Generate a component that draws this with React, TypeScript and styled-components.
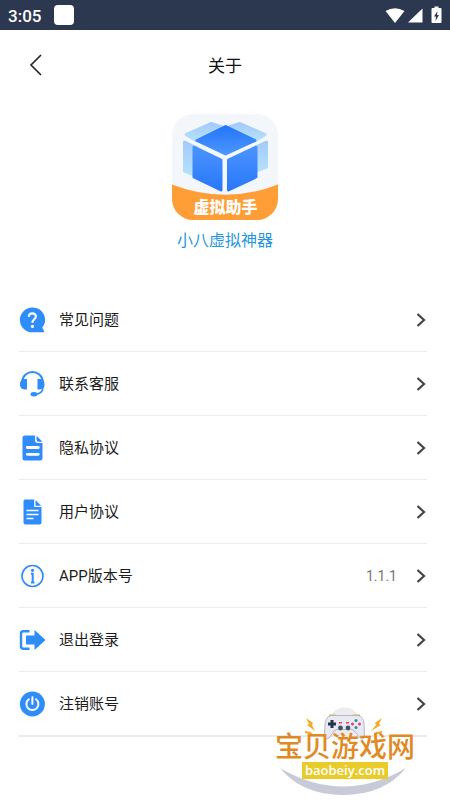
import React from "react";
import styled, { createGlobalStyle } from "styled-components";

const blue = "#2e8cfb";

const GlobalStyle = createGlobalStyle`
  * { box-sizing: border-box; }
  body {
    margin: 0;
    background: #fff;
    color: #1c1c1c;
    font-family: Roboto, "Noto Sans CJK SC", sans-serif;
  }
`;

const Page = styled.div`
  min-height: 100vh;
  overflow: hidden;
`;

const StatusBar = styled.div`
  display: flex;
  align-items: center;
  height: 30px;
  padding: 0 8px;
  background: #2b384f;
  color: #fff;
`;

const Clock = styled.time`
  font-size: 17px;
  font-weight: 500;
  line-height: 24px;
  padding-top: 1px;
`;

const AppBadge = styled.span`
  width: 20px;
  height: 20px;
  margin-left: 13px;
  border-radius: 4px;
  background: #fff;
`;

const StatusIcons = styled.svg`
  width: 60px;
  height: 20px;
  margin-left: auto;
`;

const Header = styled.header`
  display: grid;
  grid-template-columns: 40px 1fr 40px;
  align-items: center;
  height: 70px;
  padding: 0 16px;
`;

const BackButton = styled.button`
  display: flex;
  align-items: center;
  justify-content: center;
  width: 40px;
  height: 40px;
  padding: 0;
  border: 0;
  background: none;
`;

const Title = styled.h1`
  margin: 0;
  padding-top: 2px;
  font-size: 17px;
  line-height: 24px;
  font-weight: 400;
  text-align: center;
  color: #111;
`;

const Brand = styled.section`
  display: flex;
  flex-direction: column;
  align-items: center;
  gap: 9px;
  padding: 14px 0 35px;
`;

const Logo = styled.svg`
  width: 106px;
  height: 106px;
`;

const AppName = styled.p`
  margin: 0;
  font-size: 16px;
  line-height: 24px;
  color: #1f97e4;
`;

const ListArea = styled.main`
  position: relative;
  margin: 0 23px 0 19px;
`;

const List = styled.ul`
  margin: 0;
  padding: 0;
  list-style: none;
`;

const Item = styled.li`
  border-bottom: 1px solid #ececec;
  &:last-child {
    border-bottom: 2px solid #ebebeb;
  }
`;

const RowButton = styled.button`
  display: flex;
  align-items: center;
  width: 100%;
  height: 63px;
  padding: 0;
  border: 0;
  background: none;
  color: inherit;
  font: inherit;
  text-align: left;
`;

const RowIcon = styled.svg`
  flex: none;
  width: 26px;
  height: 26px;
`;

const RowLabel = styled.span`
  flex: 1;
  margin-left: 14px;
  font-size: 15px;
  line-height: 24px;
`;

const RowValue = styled.span`
  margin-right: 18px;
  font-size: 14px;
  line-height: 24px;
  color: #777;
`;

const Chevron = styled.svg`
  flex: none;
  width: 12px;
  height: 16px;
`;

const Watermark = styled.div`
  position: absolute;
  right: 10px;
  bottom: -60px;
  display: flex;
  flex-direction: column;
  align-items: center;
  width: 144px;
  height: 94px;
  padding-top: 31px;
  pointer-events: none;
`;

const WatermarkArt = styled.svg`
  position: absolute;
  inset: 0;
  width: 144px;
  height: 94px;
`;

const SiteName = styled.span`
  position: relative;
  font-size: 28px;
  font-weight: 500;
  line-height: 28px;
  white-space: nowrap;
  color: #e08a26;
`;

const SiteAddress = styled.span`
  position: relative;
  width: 86px;
  height: 17px;
  font-family: "Open Sans", sans-serif;
  font-size: 13px;
  font-weight: 600;
  line-height: 16px;
  text-align: center;
  background: #e9cb2b;
  color: #fff;
`;

const icons = {
  question: (
    <>
      <path d="M13.300 .5a12.300 12.300 0 1 0 0 24.800H25.500L23.300 20.500A12.300 12.300 0 0 0 13.300 .5Z" fill={blue} />
      <path d="M9.800 9.700C9.800 5.400 16.800 5.300 16.800 9.400C16.800 12.200 13.400 12.300 13.400 15.800" fill="none" stroke="#fff" strokeWidth="2.200" />
      <circle cx="13.400" cy="19.400" r="1.600" fill="#fff" />
    </>
  ),
  headset: (
    <>
      <path d="M3 11C4.500-2.200 22.500-2.200 24 11" fill="none" stroke={blue} strokeWidth="2" />
      <path d="M8 8v10.500H6C2.500 18.500 1 16.500 1 13.300S2.500 8 6 8ZM18.500 8v10.500h2c3.500 0 5-2 5-5.200S24 8 20.500 8Z" fill={blue} />
      <path d="M24 16.500C23.800 20.500 21 23 16 23.500" fill="none" stroke={blue} strokeWidth="1.600" />
      <ellipse cx="15" cy="23.300" rx="3.400" ry="2.200" fill={blue} />
    </>
  ),
  privacy: (
    <>
      <path d="M6 .5H16v4.500c0 2 1 3 3 3h4.500v15q0 2.500-2.500 2.500H6q-2.500 0-2.500-2.500V3Q3.500 .5 6 .5Z" fill={blue} />
      <path d="M17.500 .8l6 6h-4q-2 0-2-2Z" fill={blue} />
      <path d="M8.300 12.500h11M8.300 19.300h11" stroke="#fff" strokeWidth="2.800" strokeLinecap="round" />
    </>
  ),
  agreement: (
    <>
      <path d="M6 .5h9.200v7.500h7.300v15.500q0 2-2 2H6.500q-2 0-2-2V2.500q0-2 1.500-2Z" fill={blue} />
      <path d="M16.500 1l5.700 5.700h-5.700Z" fill={blue} />
      <path d="M7.500 11.500h12M7.500 15.500h12M7.500 19.500h7" stroke="#fff" strokeWidth="1.600" />
    </>
  ),
  info: (
    <>
      <circle cx="13.500" cy="13" r="10.500" fill="none" stroke={blue} strokeWidth="1.600" />
      <circle cx="13.500" cy="7.300" r="1.600" fill={blue} />
      <path d="M12 10.800h1.700v8.500M12 19.600h3.500" fill="none" stroke={blue} strokeWidth="2" />
    </>
  ),
  logout: (
    <>
      <path d="M10.500 4.200H4.500Q2 4.200 2 6.700v12.600q0 2.500 2.500 2.500h6" fill="none" stroke={blue} strokeWidth="2.400" />
      <path d="M7 8.500h8.500V3l11 10L15.500 23v-5.500H7Z" fill={blue} />
    </>
  ),
  power: (
    <>
      <circle cx="13.400" cy="13" r="12.500" fill={blue} />
      <path d="M9.800 8.300a6 6 0 1 0 7.200 0M13.400 6.300v6.700" fill="none" stroke="#fff" strokeWidth="2" strokeLinecap="round" />
    </>
  ),
};

const items: { icon: keyof typeof icons; label: string; value?: string }[] = [
  { icon: "question", label: "常见问题" },
  { icon: "headset", label: "联系客服" },
  { icon: "privacy", label: "隐私协议" },
  { icon: "agreement", label: "用户协议" },
  { icon: "info", label: "APP版本号", value: "1.1.1" },
  { icon: "logout", label: "退出登录" },
  { icon: "power", label: "注销账号" },
];

function AppLogo() {
  return (
    <Logo viewBox="0 0 106 106" role="img" aria-label="虚拟助手">
      <defs>
        <clipPath id="tile"><rect width="106" height="106" rx="21" /></clipPath>
        <linearGradient id="top" x1="0" y1="0" x2="0" y2="1">
          <stop offset="0" stopColor="#2575f9" />
          <stop offset="1" stopColor="#4b96ff" />
        </linearGradient>
        <linearGradient id="side" x1="0" y1="0" x2="0" y2="1">
          <stop offset="0" stopColor="#4b93ff" />
          <stop offset="1" stopColor="#2978fa" />
        </linearGradient>
        <linearGradient id="ghost" x1="0" y1="0" x2="0" y2="1">
          <stop offset="0" stopColor="#a4cafb" />
          <stop offset="1" stopColor="#b5e2fa" />
        </linearGradient>
      </defs>
      <g clipPath="url(#tile)">
        <rect width="106" height="106" fill="#f3f6fb" />
        <g fill="url(#ghost)" stroke="url(#ghost)" strokeWidth="3" strokeLinejoin="round">
          <path d="M14 20.500 39 9.500 53 14 24 27Z" />
          <path d="M93 20.500 68 9.500 54 14 84 27Z" />
          <path d="M12.500 28 25 34V62L12.500 57Z" />
          <path d="M94.500 28 82 34V58L94.500 53Z" />
        </g>
        <path d="M12 24 53.500 43.500 95 24" fill="none" stroke="#f3f9ff" strokeWidth="3" />
        <g strokeWidth="3" strokeLinejoin="round">
          <path d="M25 26.500 53.700 12.500 83 26.500 53.600 40Z" fill="url(#top)" stroke="url(#top)" />
          <path d="M22 33 49 46V76L22 63Z" fill="url(#side)" stroke="url(#side)" />
          <path d="M84 33 56.500 46V76L84 63Z" fill="url(#side)" stroke="url(#side)" />
        </g>
        <path d="M52.700 45v34" stroke="#f3f9ff" strokeWidth="3" />
        <path d="M0 70.500Q53 91 106 70.500V106H0Z" fill="#ff9d36" />
        <text x="53.500" y="99" textAnchor="middle" fontFamily='"Noto Sans CJK SC", sans-serif' fontSize="16" fontWeight="900" fill="#fff">虚拟助手</text>
      </g>
    </Logo>
  );
}

function SiteWatermark() {
  return (
    <Watermark>
      <WatermarkArt viewBox="0 0 144 94" aria-hidden="true">
        <circle cx="71.500" cy="20" r="15.500" fill="#ececef" />
        <path d="M7 65Q70 102 133 65Q111 92 70 92T7 65Z" fill="#c8cad8" />
        <path d="M56 14V11.500h7V14M80 14v-2.500h7V14" fill="#e9ae38" />
        <path d="M58 12.500H85Q91 14 91 21L91.500 34Q90 38 86 34L81.500 28Q79 25.500 76 26.500H67Q64 25.500 61 28L57 34Q53 38 51.500 34L52 21Q53 13.500 58 12.500Z" fill="#e8e9f3" stroke="#b5b7cb" />
        <path d="M59 17v8M55 21h8" stroke="#243544" strokeWidth="3" />
        <g fill="#425264"><circle cx="67.500" cy="25" r="2.400" /><circle cx="75" cy="25" r="2.400" /></g>
        <g fill="#ea405c"><circle cx="79.500" cy="21" r="1.500" /><circle cx="86.500" cy="21" r="1.500" /><path d="M66 19h3v1.500h-3zM73 19h3v1.500h-3z" /></g>
        <g fill="#258bad"><circle cx="83" cy="17.500" r="1.500" /><circle cx="83" cy="24.500" r="1.500" /></g>
        <g fill="#f4ac2b">
          <path d="M33 15l7 5-1 2 3 6-8-6 2-1Z" />
          <path d="M109 15l-7 5 1 2-5 6 10-6-2-1Z" />
          <path d="M32 28l6 1 2 3-8-2ZM109 28l-6 1-2 3 8-2Z" />
        </g>
      </WatermarkArt>
      <SiteName>宝贝游戏网</SiteName>
      <SiteAddress>baobeiy.com</SiteAddress>
    </Watermark>
  );
}

export default function App() {
  return (
    <Page>
      <GlobalStyle />
      <StatusBar>
        <Clock>3:05</Clock>
        <AppBadge />
        <StatusIcons viewBox="0 0 60 20" fill="#fff" aria-hidden="true">
          <path d="M3.500 6Q13 .5 22.500 6L13 18Z" />
          <path d="M26 17.500 40.500 3.500v14Z" />
          <path d="M52.500 1.500h4v1.500h2q1 0 1 1V17q0 1-1 1h-8q-1 0-1-1V4q0-1 1-1h2Z" />
          <path d="M55.500 6 52 11.500h2l-.5 4.500 3.500-6h-2Z" fill="#2b384f" />
        </StatusIcons>
      </StatusBar>
      <Header>
        <BackButton aria-label="返回">
          <svg width="14" height="22" viewBox="0 0 14 22" fill="none" stroke="#222" strokeWidth="1.600" aria-hidden="true">
            <path d="M12 1 2 11 12 21" />
          </svg>
        </BackButton>
        <Title>关于</Title>
      </Header>
      <Brand>
        <AppLogo />
        <AppName>小八虚拟神器</AppName>
      </Brand>
      <ListArea>
        <List>
          {items.map(({ icon, label, value }) => (
            <Item key={label}>
              <RowButton>
                <RowIcon viewBox="0 0 26 26" aria-hidden="true">{icons[icon]}</RowIcon>
                <RowLabel>{label}</RowLabel>
                {value && <RowValue>{value}</RowValue>}
                <Chevron viewBox="0 0 12 16" fill="none" stroke="#444" strokeWidth="2.200" aria-hidden="true">
                  <path d="M2.500 2 9 8 2.500 14" />
                </Chevron>
              </RowButton>
            </Item>
          ))}
        </List>
        <SiteWatermark />
      </ListArea>
    </Page>
  );
}
